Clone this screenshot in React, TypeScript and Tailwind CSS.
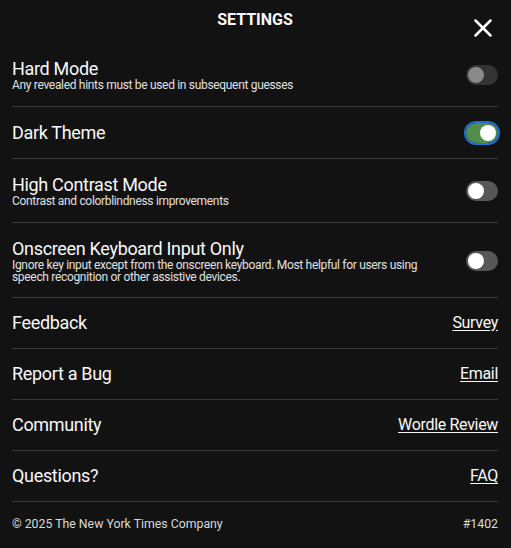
import { X } from 'lucide-react';

function Toggle({ on, disabled }: { on?: boolean; disabled?: boolean }) {
  return (
    <div
      className={
        'flex h-[20px] w-[32px] shrink-0 items-center rounded-full p-[2px] ' +
        (on ? 'justify-end bg-[#538d4e] outline-2 outline-[#1f6fd6]' : 'justify-start bg-[#565758]') +
        (disabled ? ' opacity-50' : '')
      }
    >
      <div className="h-[16px] w-[16px] rounded-full bg-white" />
    </div>
  );
}

function SettingRow({
  title,
  desc,
  on,
  disabled,
  tight,
}: {
  title: string;
  desc?: string;
  on?: boolean;
  disabled?: boolean;
  tight?: boolean;
}) {
  return (
    <div
      className={
        'flex items-center justify-between gap-6 border-b border-[#3a3a3c] pt-[15px] ' + (tight ? 'pb-[14px]' : 'pb-[15px]')
      }
    >
      <div>
        <div className="text-[18px] leading-[21px]">{title}</div>
        {desc && <div className="text-[12px] leading-[12px] text-[#e0e0e0]">{desc}</div>}
      </div>
      <Toggle on={on} disabled={disabled} />
    </div>
  );
}

function LinkRow({ title, link }: { title: string; link: string }) {
  return (
    <div className="flex items-center justify-between border-b border-[#3a3a3c] py-[15px]">
      <div className="text-[18px] leading-[20px]">{title}</div>
      <a className="text-[16px] leading-[20px] underline underline-offset-2">{link}</a>
    </div>
  );
}

export default function App() {
  return (
    <div
      className="h-[548px] w-[511px] bg-[#121213] px-[12px] pr-[13px] tracking-[-0.02em] text-[#f8f8f8]"
      style={{ fontFamily: 'Roboto, "Liberation Sans", sans-serif' }}
    >
      <div className="relative flex h-[43px] justify-center pt-[10px]">
        <h1 className="text-[16px] font-bold leading-[20px] tracking-normal">SETTINGS</h1>
        <button className="absolute right-0 top-[13px] text-white">
          <X className="h-[30px] w-[30px]" strokeWidth={2} />
        </button>
      </div>
      <SettingRow title="Hard Mode" desc="Any revealed hints must be used in subsequent guesses" disabled />
      <SettingRow title="Dark Theme" on />
      <SettingRow title="High Contrast Mode" desc="Contrast and colorblindness improvements" />
      <SettingRow
        title="Onscreen Keyboard Input Only"
        desc="Ignore key input except from the onscreen keyboard. Most helpful for users using speech recognition or other assistive devices."
        tight
      />
      <LinkRow title="Feedback" link="Survey" />
      <LinkRow title="Report a Bug" link="Email" />
      <LinkRow title="Community" link="Wordle Review" />
      <LinkRow title="Questions?" link="FAQ" />
      <div className="flex justify-between pt-[15px] text-[12.3px] leading-[14px] tracking-normal text-[#d7dadc]">
        <span>© 2025 The New York Times Company</span>
        <span>#1402</span>
      </div>
    </div>
  );
}
